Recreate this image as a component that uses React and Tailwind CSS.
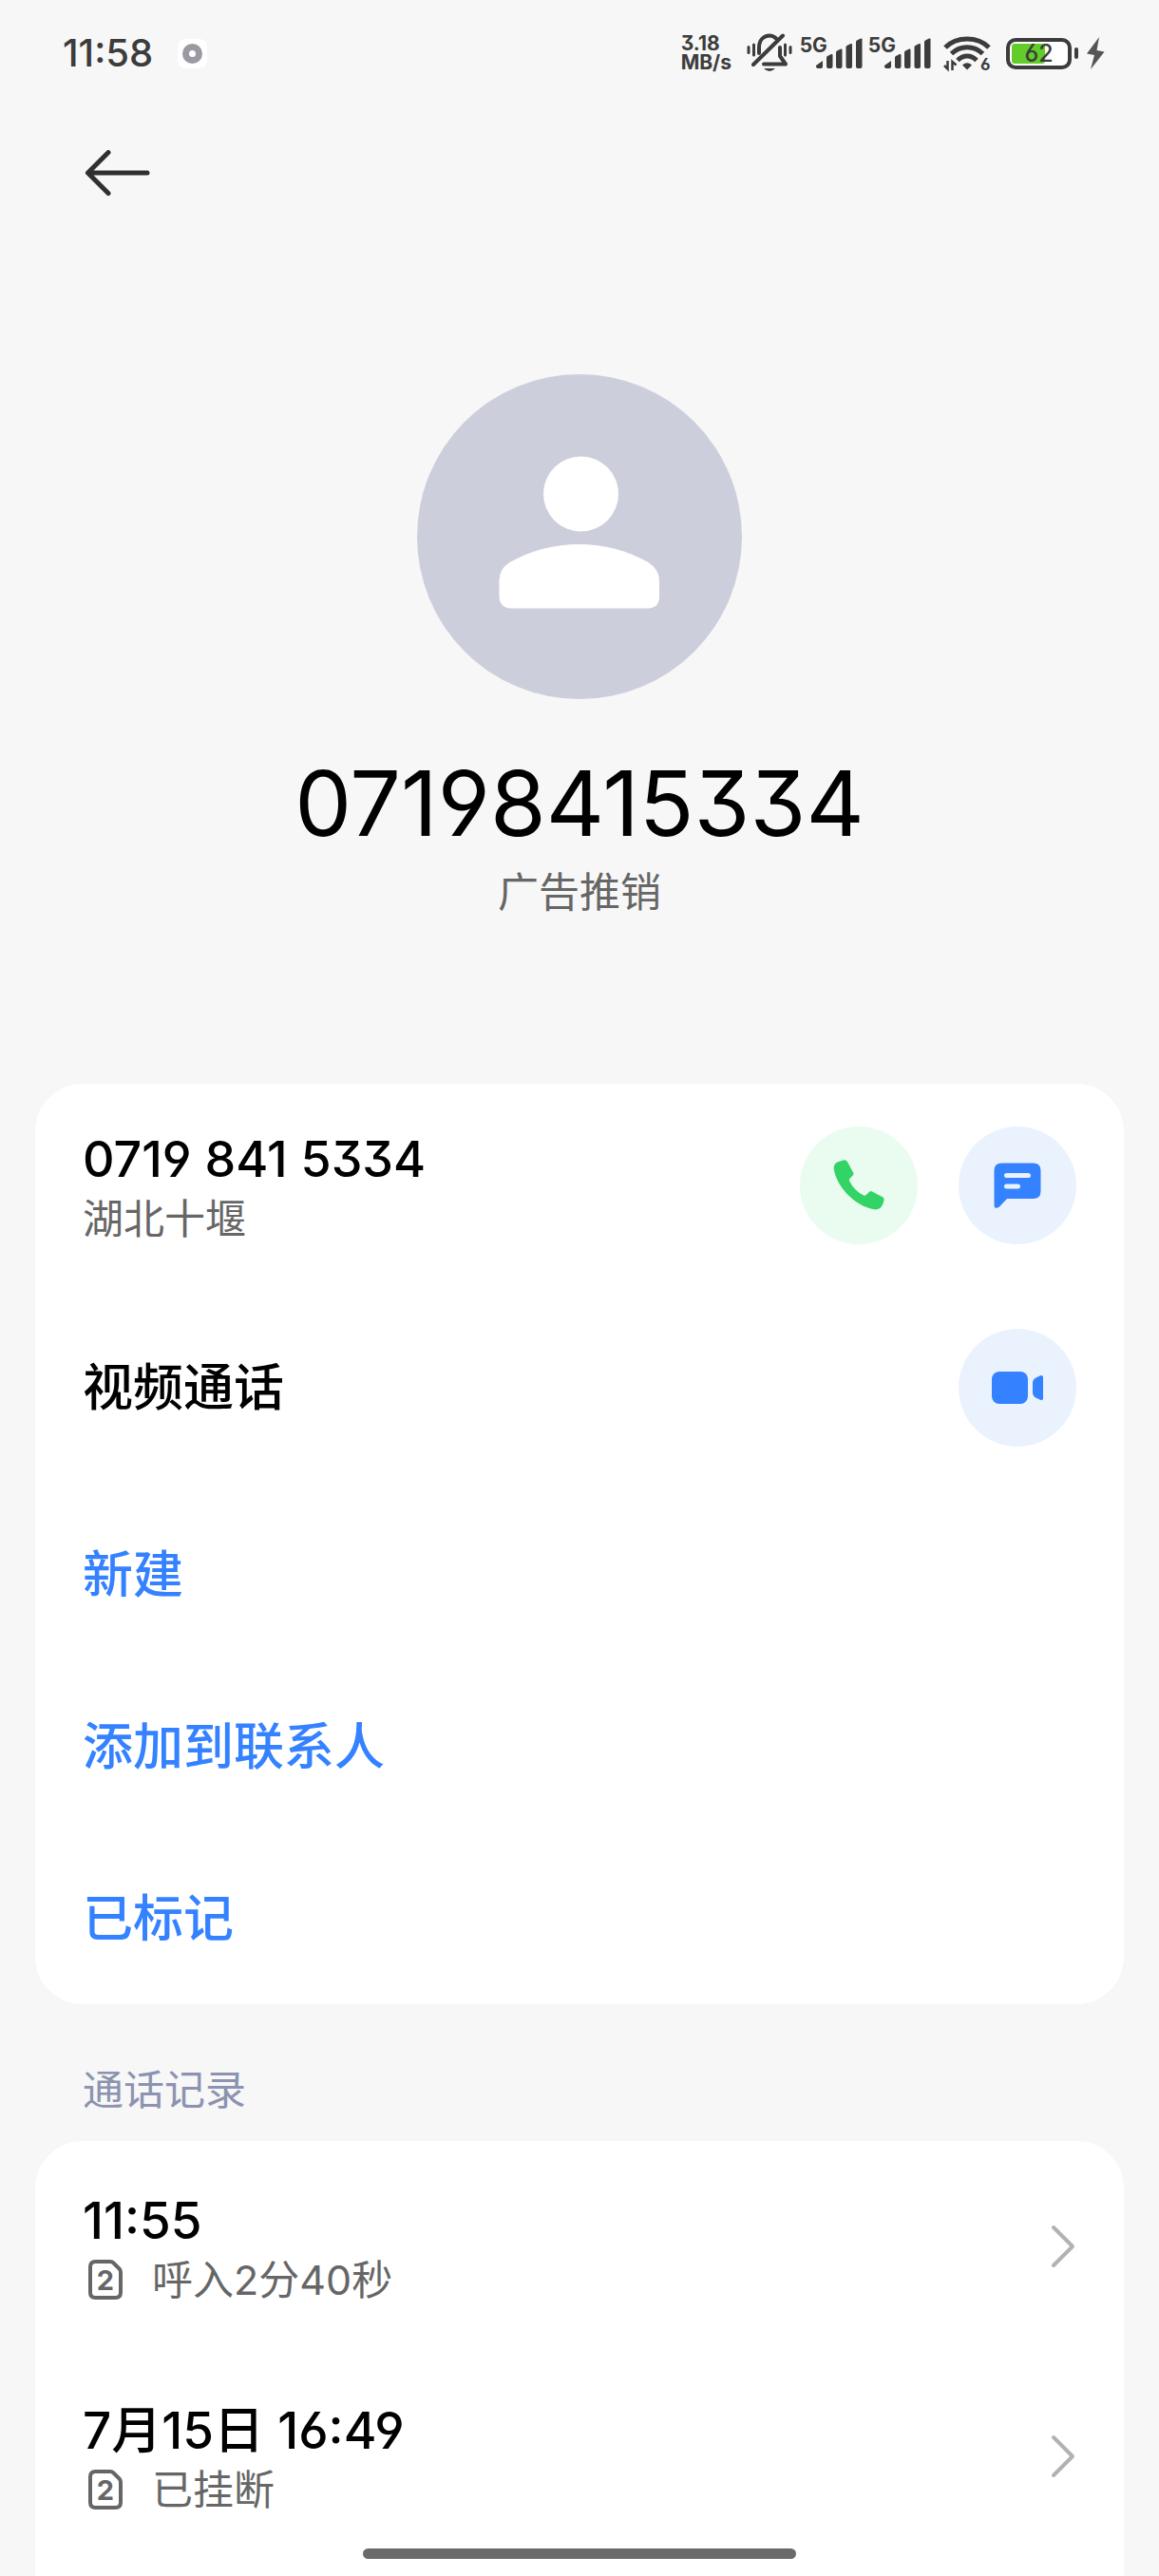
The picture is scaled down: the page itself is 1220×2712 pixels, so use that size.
const callLog = [
  { id: 1, time: '11:55', detail: '呼入2分40秒' },
  { id: 2, time: '7月15日 16:49', detail: '已挂断' },
];

const contactActions = ['新建', '添加到联系人', '已标记'];

function SignalBars() {
  return (
    <div className="flex items-start">
      <span className="text-[21px] leading-[20px] font-bold">5G</span>
      <svg className="-ml-3 w-[50px] h-9" viewBox="0 0 50 36" fill="currentColor">
        <path d="M0 31l7-5v6a2 2 0 0 1-2 2h-3a2 2 0 0 1-2-2z" />
        <path d="M11 22.500q0-1 1-1.500l4-2q1.500-.5 1.500 1v12a2 2 0 0 1-2 2h-2.500a2 2 0 0 1-2-2z" />
        <path d="M21 17q0-1 1-1.500l4-2q1.500-.5 1.500 1v17.500a2 2 0 0 1-2 2h-2.500a2 2 0 0 1-2-2z" />
        <path d="M31.500 11.500q0-1 1-1.500l4-2q1.500-.5 1.500 1v23a2 2 0 0 1-2 2h-2.500a2 2 0 0 1-2-2z" />
        <path d="M42 6q0-1 1-1.500l4-2q1.500-.5 1.500 1v28.500a2 2 0 0 1-2 2h-2.500a2 2 0 0 1-2-2z" />
      </svg>
    </div>
  );
}

function StatusBar() {
  return (
    <header className="flex items-center justify-between h-28 pl-[66px] pr-[57px] text-[#3c3c3c]">
      <div className="flex items-center gap-[26px]">
        <span className="text-[40px] leading-[48px] font-medium">11:58</span>
        <span className="flex items-center justify-center w-[31px] h-[31px] rounded-lg bg-white">
          <span className="w-[21px] h-[21px] rounded-full border-[7px] border-[#9a9aa3]" />
        </span>
      </div>

      <div className="flex items-center">
        <div className="w-[69px] text-[21px] leading-[20px] font-bold">
          <div>3.18</div>
          <div>MB/s</div>
        </div>

        {/* Muted bell */}
        <svg className="w-12 h-[42px] mr-2" viewBox="0 0 48 42" fill="none" stroke="currentColor" strokeWidth="4" strokeLinecap="round" strokeLinejoin="round">
          <path d="M13 21v-6c0-8 5-12.500 11-12.500 3 0 5 1 7 3" />
          <path d="M35 15v9l6 8.500H18" />
          <path d="M38 2.500 7 33" />
          <path d="M18 37q6 6 12 0z" fill="currentColor" stroke="none" />
          <path d="M2 14.500v6M7.500 12v11M40.500 12v11M46 14.500v6" strokeWidth="3" />
        </svg>

        <SignalBars />
        <div className="ml-[5px]">
          <SignalBars />
        </div>

        {/* Wi-Fi 6 */}
        <svg className="w-[50px] h-[40px] ml-3 overflow-visible" viewBox="0 0 50 40" fill="none" stroke="currentColor" strokeWidth="5">
          <path d="M2 14C14 2 36 2 48 14" />
          <path d="M8.500 20.500C18 11.500 32 11.500 41.500 20.500" />
          <path d="M15 27.500C21 21.500 29 21.500 35 27.500" />
          <path d="M20 32.500q5-4.500 10 0l-5 5z" fill="currentColor" stroke="none" />
          <path d="M4.500 28v8.500L1 33M9.500 38v-9l4 3.500" strokeWidth="2.500" />
          <text x="39" y="38" fontSize="17" fontWeight="700" fill="currentColor" stroke="none">6</text>
        </svg>

        {/* Battery */}
        <div className="flex items-center ml-4">
          <div className="relative w-[69px] h-[33px] rounded-[10px] border-4 border-[#3c3c3c] bg-white p-[2px]">
            <div className="h-full w-[35px] rounded-[3px] bg-[#62cc29]" />
            <span className="absolute inset-0 flex items-center justify-center text-[25px] leading-none font-medium">62</span>
          </div>
          <span className="ml-[3px] w-1 h-3 rounded-full bg-[#3c3c3c]" />
        </div>
        <svg className="w-5 h-[34px] ml-2" viewBox="0 0 20 34" fill="#555">
          <path d="M14 0 1 17.500l8 1.500L5 34 19.500 15.500 11.500 14z" />
        </svg>
      </div>
    </header>
  );
}

function SimIcon() {
  return (
    <svg className="w-9 h-[42px] overflow-visible" viewBox="0 0 36 42" fill="none" stroke="#666" strokeWidth="4" strokeLinejoin="round">
      <path d="M7.500 2H23q2 0 3.500 1.500l6 6Q34 11 34 13v21.500Q34 40 28.500 40h-21Q2 40 2 34.500v-27Q2 2 7.500 2z" />
      <text x="18" y="32" textAnchor="middle" fontSize="29" fontWeight="700" fill="#666" stroke="none">2</text>
    </svg>
  );
}

function RoundButton({ label, className, children }) {
  return (
    <button type="button" aria-label={label} className={`flex items-center justify-center w-[124px] h-[124px] rounded-full ${className}`}>
      {children}
    </button>
  );
}

export default function App() {
  return (
    <div className="flex flex-col min-h-screen bg-[#f7f7f7] text-black font-['Inter','Noto_Sans_CJK_SC',sans-serif] [font-feature-settings:'cv03','cv04','cv09']">
      <StatusBar />

      <nav className="flex items-center h-[139px] px-[88px]">
        <button type="button" aria-label="返回">
          <svg className="w-[72px] h-12" viewBox="0 0 72 48" fill="none" stroke="#303030" strokeWidth="5" strokeLinecap="round" strokeLinejoin="round">
            <path d="M26 2.500 4.500 24 26 45.500M5 24h62" />
          </svg>
        </button>
      </nav>

      {/* Profile */}
      <section className="flex flex-col items-center pt-[143px] pb-[172px]">
        <svg className="w-[342px] h-[342px] mb-[50px]" viewBox="0 0 342 342">
          <circle cx="171" cy="171" r="171" fill="#cdcedb" />
          <circle cx="172.500" cy="126" r="39.500" fill="#fff" />
          <path d="M86.500 217q0-12 11-19c44-25.500 102-25.500 146 0q11.500 8 11.500 19v17q0 12-12 12.500h-144q-12-.5-12.500-12.500z" fill="#fff" />
        </svg>
        <h1 className="text-[95px] leading-[120px] font-normal">07198415334</h1>
        <p className="mt-[3px] text-[43px] leading-[60px] text-[#666]">广告推销</p>
      </section>

      {/* Contact card */}
      <section className="mx-[37px] rounded-[50px] bg-white">
        <div className="flex items-center justify-between h-[213px] px-[50px]">
          <div className="pt-[6px]">
            <div className="text-[52px] leading-[64px] font-medium">0719 841 5334</div>
            <div className="text-[43px] leading-[60px] text-[#666]">湖北十堰</div>
          </div>
          <div className="flex gap-[43px]">
            <RoundButton label="拨打电话" className="bg-[#eafbf0]">
              <svg className="w-[54px] h-[54px]" viewBox="0 0 54 54" fill="#32d465">
                <path d="M4.500 2.500 10.500.6q3-1 4.500 1.600l6.200 11.200q.8 1.700-.5 3l-3.200 3.300q-1 1.200-.4 2.600 5 10.500 15 15.200 1.500.5 2.600-.4l3.200-3.200q1.400-1.300 3.200-.5l11 5.800q1.700 1 1.500 3.300-.4 3.500-3.200 7.500-2.400 2.800-7 2.300C24 49 4 30 .7 9.500q-.4-5 3.800-7z" />
              </svg>
            </RoundButton>
            <RoundButton label="发送短信" className="bg-[#eaf2fe]">
              <svg className="w-[50px] h-12" viewBox="0 0 50 48" fill="#3482ff">
                <path d="M8.500.5h33q8 0 8 8V30q0 8-8 8H14l-8 8.500Q.5 50 .5 44.500v-36q0-8 8-8z" />
                <path d="M13.500 13.500h23M13.500 25h12" stroke="#eaf2fe" strokeWidth="5" strokeLinecap="round" />
              </svg>
            </RoundButton>
          </div>
        </div>

        <div className="flex items-center justify-between h-[213px] px-[50px]">
          <span className="text-[53px] leading-[64px] font-medium">视频通话</span>
          <RoundButton label="视频通话" className="bg-[#eaf2fe]">
            <svg className="w-[54px] h-[34px]" viewBox="0 0 54 34" fill="#3482ff">
              <rect x="0" y="0" width="38" height="34" rx="8" />
              <path d="M43 12q0-3.500 3-5.200l5-2.600q2.500-1 3 1.300v23q-.5 2.300-3 1.300l-5-2.600q-3-1.700-3-5.200z" />
            </svg>
          </RoundButton>
        </div>

        {contactActions.map((action) => (
          <button key={action} type="button" className="flex items-center w-full h-[181px] px-[50px] text-[53px] leading-[64px] font-medium text-[#3482ff]">
            {action}
          </button>
        ))}
      </section>

      {/* Call history */}
      <h2 className="px-[87px] pt-[60px] pb-6 text-[43px] leading-[60px] text-[#8c93b0]">通话记录</h2>
      <section className="flex-1 mx-[37px] rounded-t-[50px] bg-white">
        {callLog.map((call) => (
          <button key={call.id} type="button" className="flex items-center justify-between w-full h-[221px] px-[50px] text-left">
            <div className="pt-[6px]">
              <div className="text-[53px] leading-[64px] font-medium">{call.time}</div>
              <div className="flex items-center gap-[31px] pl-[6px] text-[43px] leading-[60px] text-[#666]">
                <SimIcon />
                {call.detail}
              </div>
            </div>
            <svg className="w-7 h-12" viewBox="0 0 28 48" fill="none" stroke="#b2b2b2" strokeWidth="4" strokeLinecap="round" strokeLinejoin="round">
              <path d="M4 4l20 20L4 44" />
            </svg>
          </button>
        ))}
      </section>

      {/* Home indicator */}
      <div className="fixed bottom-[18px] left-1/2 -translate-x-1/2 w-[456px] h-[11px] rounded-full bg-[#6a6a6a]" />
    </div>
  );
}
